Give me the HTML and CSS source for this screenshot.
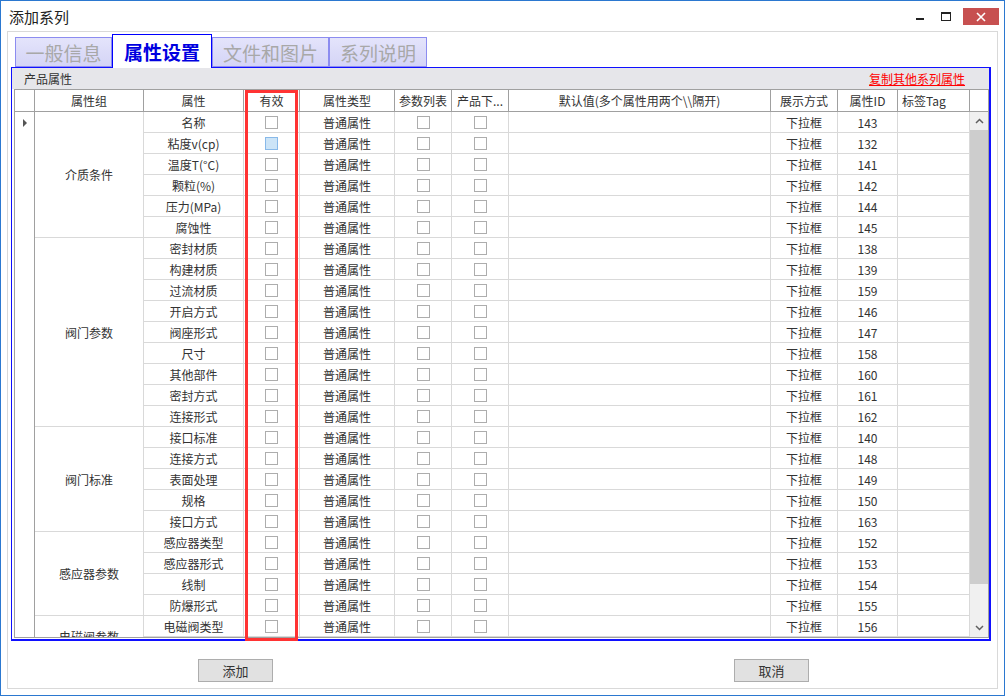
FILE: index.html
```html
<!DOCTYPE html>
<html lang="zh-CN">
<head>
    <meta charset="UTF-8">
    <title>添加系列</title>
    <link rel="stylesheet" href="styles.css">
</head>
<body>
    <div class="window">
        <div class="titlebar">
            <div class="title">添加系列</div>
            <div class="controls">
                <div class="ctrl"><span class="min-icon"></span></div>
                <div class="ctrl max"><span class="max-icon"></span></div>
                <div class="ctrl close">
                    <svg width="10" height="10" viewBox="0 0 10 10"><path d="M1 1L9 9M9 1L1 9" stroke="#fff" stroke-width="1.6"/></svg>
                </div>
            </div>
        </div>

        <div class="frame">
            <div class="tabs">
                <div class="tab t1">一般信息</div>
                <div class="tab t2 active">属性设置</div>
                <div class="tab t3">文件和图片</div>
                <div class="tab t4">系列说明</div>
            </div>

            <div class="panel">
                <div class="panel-head">
                    <span>产品属性</span>
                    <span class="link">复制其他系列属性</span>
                </div>
                <div class="grid">
                    <div class="ghead">
                        <div></div>
                        <div>属性组</div>
                        <div>属性</div>
                        <div>有效</div>
                        <div>属性类型</div>
                        <div>参数列表</div>
                        <div><span class="ellip">产品下...</span></div>
                        <div>默认值(多个属性用两个\\隔开)</div>
                        <div>展示方式</div>
                        <div>属性ID</div>
                        <div class="left">标签Tag</div>
                        <div></div>
                    </div>
                    <div class="gbody">
                        <div class="rows">
                            <!-- 介质条件 -->
                            <div class="rh"><span class="arrow"></span></div><div class="grp span-6">介质条件</div><div>名称</div><div><i class="cb"></i></div><div>普通属性</div><div><i class="cb"></i></div><div><i class="cb"></i></div><div></div><div>下拉框</div><div>143</div><div></div>
                            <div class="rh"></div><div>粘度v(cp)</div><div><i class="cb hot"></i></div><div>普通属性</div><div><i class="cb"></i></div><div><i class="cb"></i></div><div></div><div>下拉框</div><div>132</div><div></div>
                            <div class="rh"></div><div>温度T(°C)</div><div><i class="cb"></i></div><div>普通属性</div><div><i class="cb"></i></div><div><i class="cb"></i></div><div></div><div>下拉框</div><div>141</div><div></div>
                            <div class="rh"></div><div>颗粒(%)</div><div><i class="cb"></i></div><div>普通属性</div><div><i class="cb"></i></div><div><i class="cb"></i></div><div></div><div>下拉框</div><div>142</div><div></div>
                            <div class="rh"></div><div>压力(MPa)</div><div><i class="cb"></i></div><div>普通属性</div><div><i class="cb"></i></div><div><i class="cb"></i></div><div></div><div>下拉框</div><div>144</div><div></div>
                            <div class="rh"></div><div>腐蚀性</div><div><i class="cb"></i></div><div>普通属性</div><div><i class="cb"></i></div><div><i class="cb"></i></div><div></div><div>下拉框</div><div>145</div><div></div>
                            <!-- 阀门参数 -->
                            <div class="rh"></div><div class="grp span-9">阀门参数</div><div>密封材质</div><div><i class="cb"></i></div><div>普通属性</div><div><i class="cb"></i></div><div><i class="cb"></i></div><div></div><div>下拉框</div><div>138</div><div></div>
                            <div class="rh"></div><div>构建材质</div><div><i class="cb"></i></div><div>普通属性</div><div><i class="cb"></i></div><div><i class="cb"></i></div><div></div><div>下拉框</div><div>139</div><div></div>
                            <div class="rh"></div><div>过流材质</div><div><i class="cb"></i></div><div>普通属性</div><div><i class="cb"></i></div><div><i class="cb"></i></div><div></div><div>下拉框</div><div>159</div><div></div>
                            <div class="rh"></div><div>开启方式</div><div><i class="cb"></i></div><div>普通属性</div><div><i class="cb"></i></div><div><i class="cb"></i></div><div></div><div>下拉框</div><div>146</div><div></div>
                            <div class="rh"></div><div>阀座形式</div><div><i class="cb"></i></div><div>普通属性</div><div><i class="cb"></i></div><div><i class="cb"></i></div><div></div><div>下拉框</div><div>147</div><div></div>
                            <div class="rh"></div><div>尺寸</div><div><i class="cb"></i></div><div>普通属性</div><div><i class="cb"></i></div><div><i class="cb"></i></div><div></div><div>下拉框</div><div>158</div><div></div>
                            <div class="rh"></div><div>其他部件</div><div><i class="cb"></i></div><div>普通属性</div><div><i class="cb"></i></div><div><i class="cb"></i></div><div></div><div>下拉框</div><div>160</div><div></div>
                            <div class="rh"></div><div>密封方式</div><div><i class="cb"></i></div><div>普通属性</div><div><i class="cb"></i></div><div><i class="cb"></i></div><div></div><div>下拉框</div><div>161</div><div></div>
                            <div class="rh"></div><div>连接形式</div><div><i class="cb"></i></div><div>普通属性</div><div><i class="cb"></i></div><div><i class="cb"></i></div><div></div><div>下拉框</div><div>162</div><div></div>
                            <!-- 阀门标准 -->
                            <div class="rh"></div><div class="grp span-5">阀门标准</div><div>接口标准</div><div><i class="cb"></i></div><div>普通属性</div><div><i class="cb"></i></div><div><i class="cb"></i></div><div></div><div>下拉框</div><div>140</div><div></div>
                            <div class="rh"></div><div>连接方式</div><div><i class="cb"></i></div><div>普通属性</div><div><i class="cb"></i></div><div><i class="cb"></i></div><div></div><div>下拉框</div><div>148</div><div></div>
                            <div class="rh"></div><div>表面处理</div><div><i class="cb"></i></div><div>普通属性</div><div><i class="cb"></i></div><div><i class="cb"></i></div><div></div><div>下拉框</div><div>149</div><div></div>
                            <div class="rh"></div><div>规格</div><div><i class="cb"></i></div><div>普通属性</div><div><i class="cb"></i></div><div><i class="cb"></i></div><div></div><div>下拉框</div><div>150</div><div></div>
                            <div class="rh"></div><div>接口方式</div><div><i class="cb"></i></div><div>普通属性</div><div><i class="cb"></i></div><div><i class="cb"></i></div><div></div><div>下拉框</div><div>163</div><div></div>
                            <!-- 感应器参数 -->
                            <div class="rh"></div><div class="grp span-4">感应器参数</div><div>感应器类型</div><div><i class="cb"></i></div><div>普通属性</div><div><i class="cb"></i></div><div><i class="cb"></i></div><div></div><div>下拉框</div><div>152</div><div></div>
                            <div class="rh"></div><div>感应器形式</div><div><i class="cb"></i></div><div>普通属性</div><div><i class="cb"></i></div><div><i class="cb"></i></div><div></div><div>下拉框</div><div>153</div><div></div>
                            <div class="rh"></div><div>线制</div><div><i class="cb"></i></div><div>普通属性</div><div><i class="cb"></i></div><div><i class="cb"></i></div><div></div><div>下拉框</div><div>154</div><div></div>
                            <div class="rh"></div><div>防爆形式</div><div><i class="cb"></i></div><div>普通属性</div><div><i class="cb"></i></div><div><i class="cb"></i></div><div></div><div>下拉框</div><div>155</div><div></div>
                            <!-- 电磁阀参数 (continues below the fold) -->
                            <div class="rh"></div><div class="grp span-2">电磁阀参数</div><div>电磁阀类型</div><div><i class="cb"></i></div><div>普通属性</div><div><i class="cb"></i></div><div><i class="cb"></i></div><div></div><div>下拉框</div><div>156</div><div></div>
                            <div class="rh"></div><div></div><div></div><div></div><div></div><div></div><div></div><div></div><div></div><div></div>
                        </div>
                        <div class="vscroll">
                            <div class="sb-btn">
                                <svg width="9" height="6" viewBox="0 0 9 6"><path d="M1 5L4.5 1.5L8 5" fill="none" stroke="#606060" stroke-width="1.5"/></svg>
                            </div>
                            <div class="thumb"></div>
                            <div class="track"></div>
                            <div class="sb-btn">
                                <svg width="9" height="6" viewBox="0 0 9 6"><path d="M1 1L4.5 4.5L8 1" fill="none" stroke="#606060" stroke-width="1.5"/></svg>
                            </div>
                        </div>
                    </div>
                </div>
            </div>

            <div class="actions">
                <div class="btn add">添加</div>
                <div class="btn cancel">取消</div>
            </div>
        </div>

        <div class="mark"></div>
    </div>
</body>
</html>
```

FILE: styles.css
```css
* {
    margin: 0;
    padding: 0;
    box-sizing: border-box;
}

body {
    font-family: "Noto Sans CJK SC", "Microsoft YaHei", sans-serif;
    font-size: 12px;
    color: #333;
    background: #fff;
    width: 1005px;
    height: 696px;
    overflow: hidden;
}

.window {
    position: relative;
    width: 1005px;
    height: 696px;
    border: 1px solid #2b78d0;
    background: #fff;
}

/* title bar */
.titlebar {
    height: 30px;
    display: flex;
    justify-content: space-between;
    align-items: center;
    padding-left: 8px;
}

.title {
    font-size: 15px;
    color: #222;
}

.controls {
    display: flex;
    align-self: flex-start;
    padding-top: 7px;
}

.ctrl {
    width: 26px;
    height: 17px;
    display: flex;
    align-items: center;
    justify-content: center;
}

.ctrl.max {
    margin-right: 4px;
}

.min-icon {
    width: 8px;
    height: 2px;
    margin-top: 5px;
    background: #222;
}

.max-icon {
    width: 10px;
    height: 9px;
    border: 1px solid #222;
    border-top-width: 2px;
}

.ctrl.close {
    width: 36px;
    margin-right: 5px;
    background: #c75050;
}

/* inner frame */
.frame {
    margin: 0 6px;
    height: 658px;
    border: 1px solid #d9d9d9;
}

.tabs {
    display: flex;
    align-items: flex-end;
    height: 33px;
    margin: 2px 0 0 7px;
}

.tab {
    height: 30px;
    border: 1px solid #8c8cf0;
    background: linear-gradient(#e4e4fb, #d4d4f6);
    color: #a8a8a8;
    font-size: 19px;
    display: flex;
    align-items: center;
    justify-content: center;
}

.t1 { width: 97px; }
.t2 { width: 100px; }
.t3 { width: 117px; }
.t4 { width: 98px; }

.tab.active {
    position: relative;
    z-index: 1;
    height: 34px;
    margin-bottom: -1px;
    background: #fff;
    border-color: #0000ff;
    border-bottom: none;
    color: #0000e0;
    font-weight: bold;
}

.panel {
    width: 980px;
    height: 574px;
    margin-left: 3px;
    border: solid #1010ff;
    border-width: 1px 2px 2px 1px;
}

.panel-head {
    height: 21px;
    background: #e6e6ea;
    display: flex;
    justify-content: space-between;
    align-items: center;
    padding-left: 12px;
}

.link {
    color: #f00;
    text-decoration: underline;
    margin-right: 24px;
}

/* data grid */
.grid {
    margin: 0 0 1px 2px;
    height: 549px;
    border: 1px solid #a0a0a0;
}

.ghead {
    display: grid;
    grid-template-columns: 20px 109px 100px 56px 95px 57px 57px 262px 67px 60px 72px 18px;
    height: 22px;
}

.ghead > div {
    border-right: 1px solid #a0a0a0;
    border-bottom: 1px solid #a0a0a0;
    display: flex;
    align-items: center;
    justify-content: center;
    white-space: nowrap;
    overflow: hidden;
}

.ghead > div:last-child {
    border-right: none;
}

.ghead .left {
    justify-content: flex-start;
    padding-left: 4px;
}

.ellip {
    letter-spacing: 0;
}

.gbody {
    display: flex;
    height: 525px;
}

.rows {
    display: grid;
    grid-template-columns: 20px 109px 100px 56px 95px 57px 57px 262px 67px 60px 72px;
    grid-auto-rows: 21px;
    align-content: start;
    width: 955px;
    height: 525px;
    overflow: hidden;
}

.rows > div {
    border-right: 1px solid #d9d9d9;
    border-bottom: 1px solid #d9d9d9;
    display: flex;
    align-items: center;
    justify-content: center;
    white-space: nowrap;
}

.rows > .rh {
    border-right-color: #a0a0a0;
    border-bottom: none;
}

.arrow {
    width: 0;
    height: 0;
    border-top: 4px solid transparent;
    border-bottom: 4px solid transparent;
    border-left: 4px solid #555;
}

.span-2 { grid-row: span 2; }
.span-4 { grid-row: span 4; }
.span-5 { grid-row: span 5; }
.span-6 { grid-row: span 6; }
.span-9 { grid-row: span 9; }

.cb {
    display: block;
    width: 13px;
    height: 13px;
    border: 1px solid #adadad;
    background: #fff;
}

.cb.hot {
    background: #cce4f7;
    border-color: #88b9e9;
}

.vscroll {
    width: 18px;
    background: #f0f0f0;
    display: flex;
    flex-direction: column;
}

.sb-btn {
    height: 18px;
    display: flex;
    align-items: center;
    justify-content: center;
}

.thumb {
    height: 454px;
    background: #cdcdcd;
}

.track {
    flex: 1;
}

/* bottom buttons */
.actions {
    display: flex;
    margin-top: 18px;
}

.btn {
    width: 75px;
    height: 23px;
    background: #e1e1e1;
    border: 1px solid #adadad;
    font-size: 13px;
    display: flex;
    align-items: center;
    justify-content: center;
}

.btn.add {
    margin-left: 190px;
}

.btn.cancel {
    margin-left: 461px;
}

/* red highlight drawn over the 有效 column */
.mark {
    position: absolute;
    left: 244px;
    top: 89px;
    width: 53px;
    height: 551px;
    border: 3px solid #f33;
}
```
